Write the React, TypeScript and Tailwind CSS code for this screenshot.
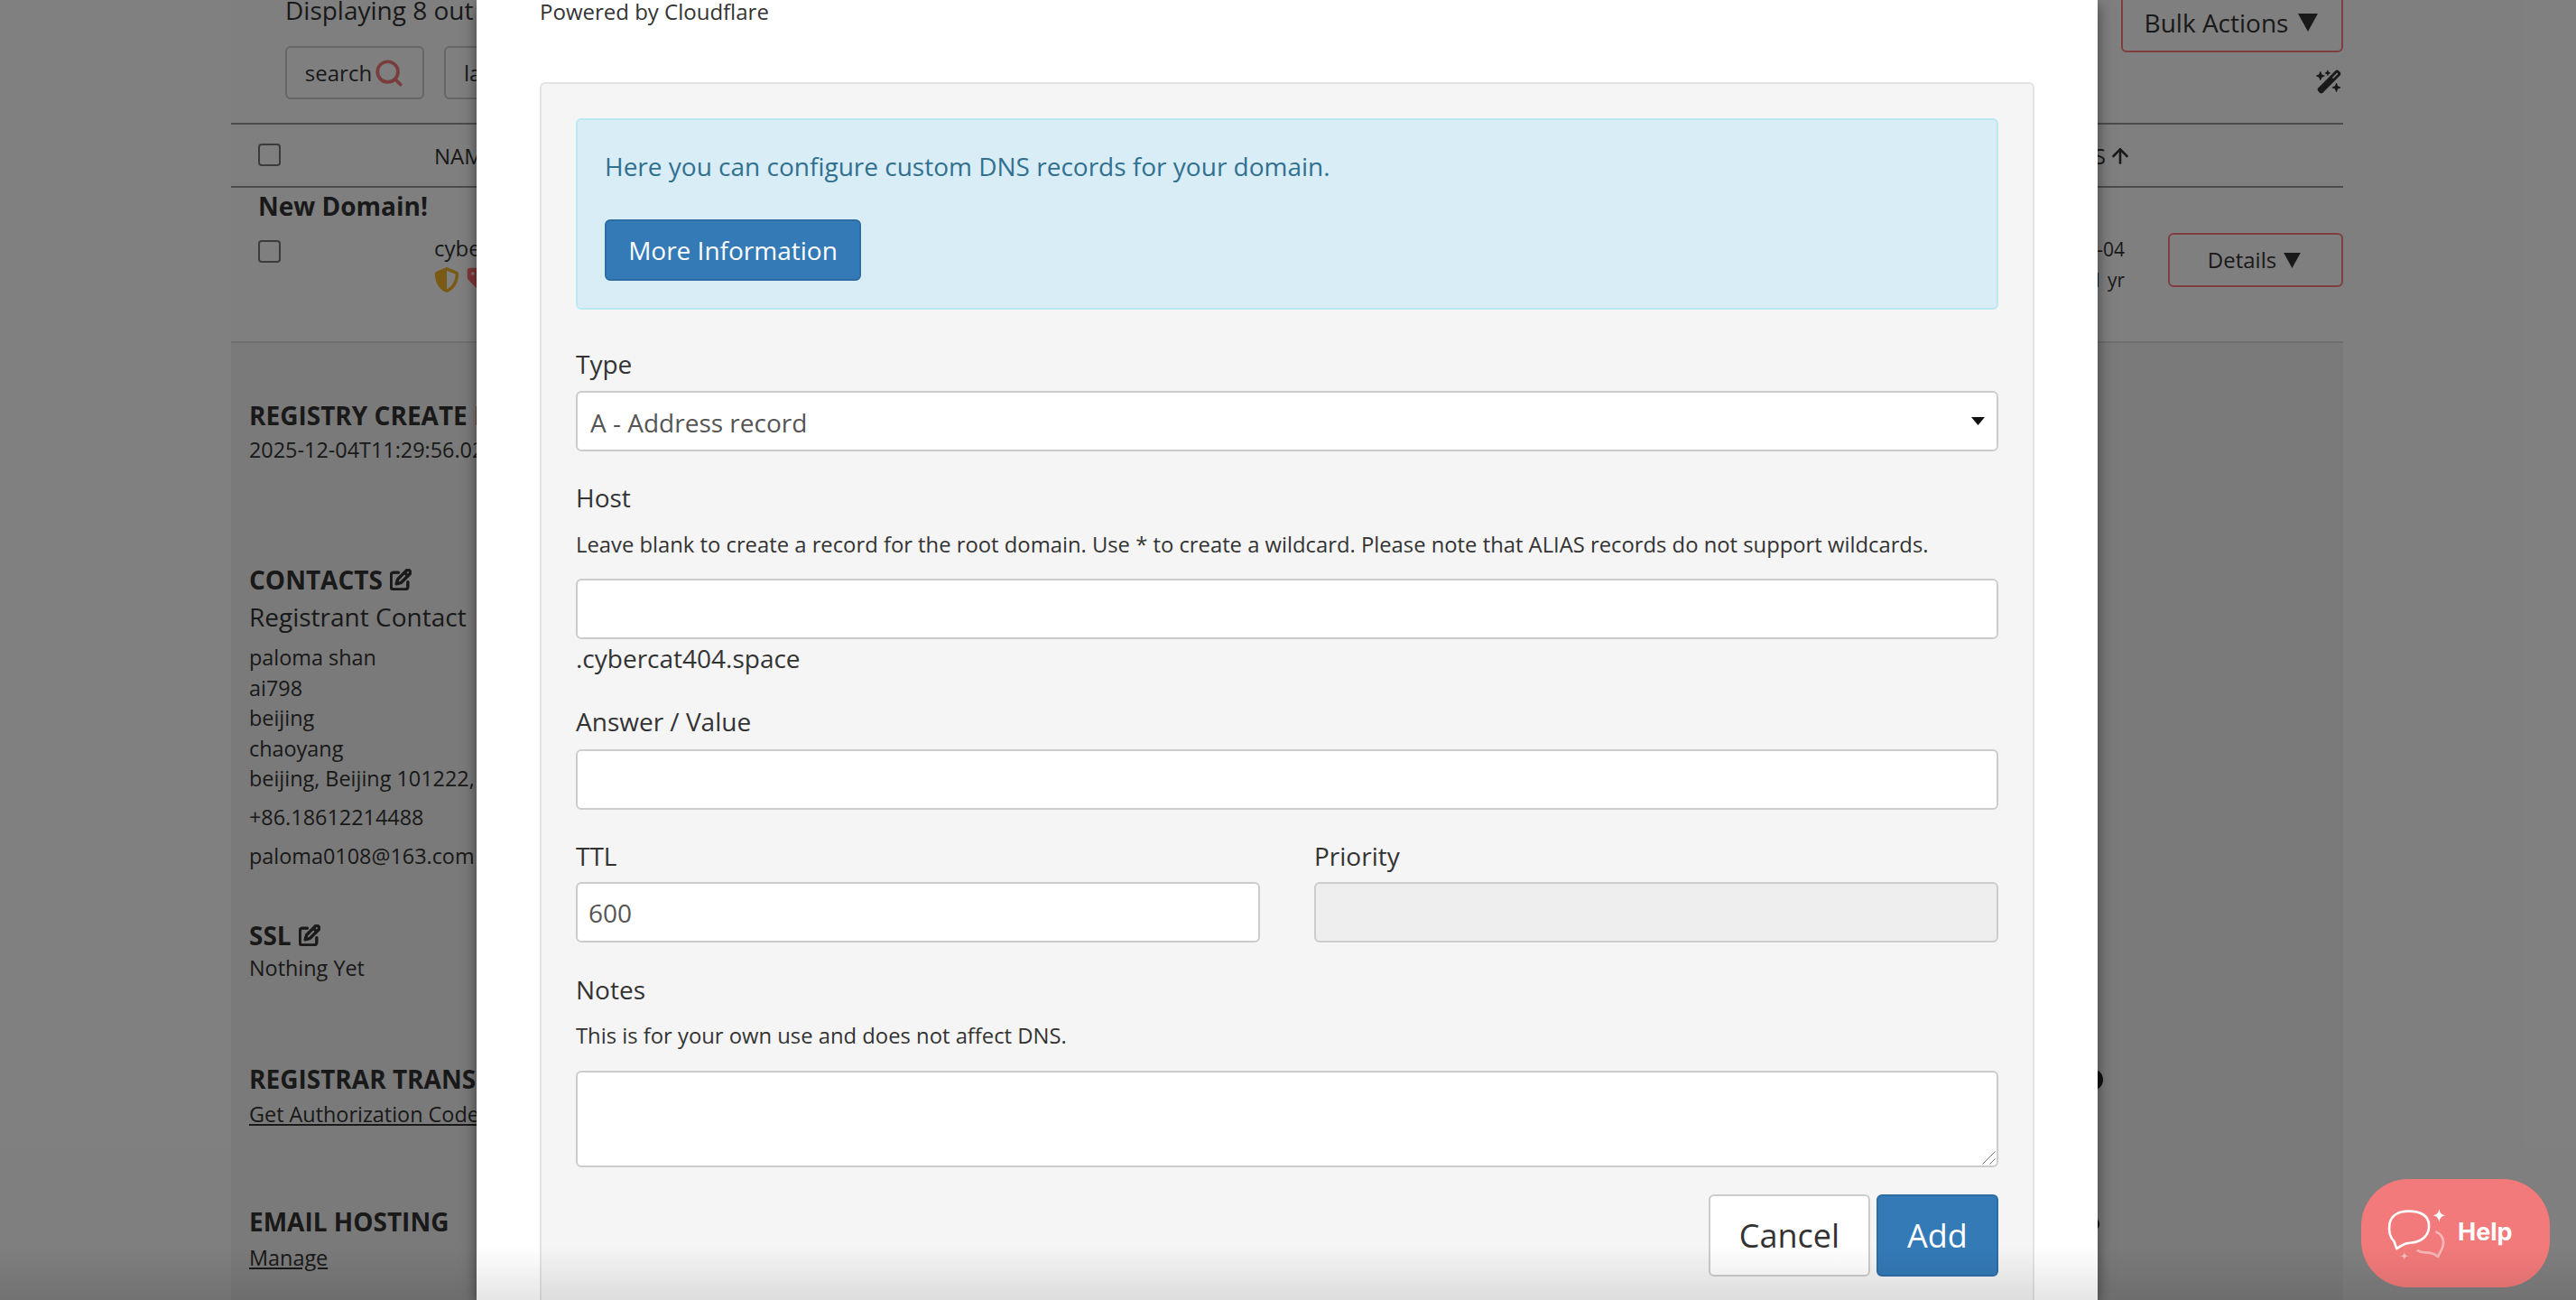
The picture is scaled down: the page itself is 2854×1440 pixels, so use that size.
import { Search, ArrowUp } from "lucide-react";
import { FaRegPenToSquare, FaWandMagicSparkles, FaShieldHalved, FaTag } from "react-icons/fa6";

function Checkbox({ className }: { className: string }) {
  return <div className={"h-[25px] w-[25px] shrink-0 rounded-[4px] border-2 border-[#767676] bg-white " + className} />;
}

function Triangle({ className }: { className: string }) {
  return (
    <svg className={className} viewBox="0 0 22 20">
      <path d="M0 0H22L11 20Z" fill="currentColor" />
    </svg>
  );
}

function EditIcon() {
  return <FaRegPenToSquare className="h-[24px] w-[24px]" stroke="currentColor" strokeWidth={24} />;
}

function Head({ className, children }: { className: string; children: React.ReactNode }) {
  return <div className={"flex items-center gap-[8px] whitespace-nowrap text-[28px] font-bold leading-[36px] " + className}>{children}</div>;
}

function Line({ className, children }: { className: string; children: React.ReactNode }) {
  return <div className={"whitespace-nowrap text-[23.4px] leading-[28px] " + className}>{children}</div>;
}

function Page() {
  return (
    <div className="mx-[256px] w-[2340px] text-[#333]">
      <div className="flex h-[136px] justify-between">
        <div className="pl-[60px]">
          <div className="-mt-[2px] whitespace-nowrap text-[28px] leading-[26px]">Displaying 8 out of 8 domains</div>
          <div className="mt-[27px] flex gap-[22px]">
            <div className="flex h-[59px] w-[154px] items-center justify-center gap-[2px] rounded-[6px] border-2 border-[#ccc] text-[24px]">
              search
              <Search className="h-[34px] w-[34px] text-[#f27a7a]" strokeWidth={2.6} />
            </div>
            <div className="flex h-[59px] w-[200px] items-center rounded-[6px] border-2 border-[#ccc] pl-[20px] text-[24px]">
              language
            </div>
          </div>
        </div>
        <div className="flex flex-col items-end">
          <div className="-mt-[10px] flex h-[68px] w-[246px] items-center justify-center gap-[11px] rounded-[6px] border-2 border-[#ff7a7a] pr-[2px] pt-[2px] text-[28px]">
            Bulk Actions <Triangle className="h-[20px] w-[22px]" />
          </div>
          <FaWandMagicSparkles className="mr-[1px] mt-[18px] h-[29px] w-[29px]" />
        </div>
      </div>
      <div className="flex h-[72px] items-center border-y-2 border-[#999] pl-[30px]">
        <Checkbox className="-mt-[2px]" />
        <span className="ml-[170px] pt-[2px] text-[24px]">NAME</span>
        <span className="ml-auto mr-[234px] flex items-center pt-[1px] text-[24px]">
          STATUS <ArrowUp className="ml-[3px] h-[26px] w-[26px]" strokeWidth={2.4} />
        </span>
      </div>
      <div className="h-[172px] border-b-2 border-[#ddd] pl-[30px]">
        <div className="pt-[2px] text-[28px] font-bold leading-[36px]">New Domain!</div>
        <div className="flex items-start">
          <Checkbox className="mt-[20px]" />
          <div className="ml-[170px] mt-[16px]">
            <div className="text-[24px] leading-[26px]">cybercat404.space</div>
            <div className="mt-[7px] flex gap-[7px]">
              <FaShieldHalved className="h-[30px] w-[28px] text-[#f0b429]" />
              <FaTag className="h-[28px] w-[28px] text-[#ff6f6f]" />
            </div>
          </div>
          <div className="ml-auto mt-[13px] text-right text-[21px] leading-[34px]">
            <div>2026-12-04</div>
            <div>1 yr</div>
          </div>
          <div className="ml-[48px] mt-[12px] flex h-[60px] w-[194px] items-center justify-center gap-[8px] rounded-[6px] border-2 border-[#ff7a7a] pr-[3px] text-[24px]">
            Details <Triangle className="h-[17px] w-[19px]" />
          </div>
        </div>
      </div>
      <div className="relative h-[1100px] bg-[#f5f5f5] pl-[20px]">
        <Head className="pt-[62px]">REGISTRY CREATE DATE</Head>
        <Line className="mt-[6px]">2025-12-04T11:29:56.02Z</Line>
        <Head className="mt-[112px]">
          CONTACTS <EditIcon />
        </Head>
        <div className="mt-[5px] text-[28px] leading-[36px]">Registrant Contact</div>
        <div className="mt-[11px] text-[23.4px] leading-[33.5px]">
          <div>paloma shan</div>
          <div>ai798</div>
          <div>beijing</div>
          <div>chaoyang</div>
          <div>beijing, Beijing 101222, CN</div>
        </div>
        <Line className="mt-[11px]">+86.18612214488</Line>
        <Line className="mt-[15px]">paloma0108@163.com</Line>
        <Head className="mt-[56px]">
          SSL <EditIcon />
        </Head>
        <Line className="mt-[4px]">Nothing Yet</Line>
        <Head className="mt-[91px]">REGISTRAR TRANSFER</Head>
        <Line className="mt-[7px] underline">Get Authorization Code</Line>
        <Head className="mt-[87px]">EMAIL HOSTING</Head>
        <Line className="mt-[8px] underline">Manage</Line>
        <div className="absolute left-[2050px] top-[804px] h-[24px] w-[24px] rounded-full bg-[#222]" />
        <div className="absolute left-[2054px] top-[968px] h-[16px] w-[16px] rounded-full bg-[#222]" />
      </div>
    </div>
  );
}

const control = "block w-full rounded-[6px] border-2 border-[#ccc] bg-white text-[28px] text-[#555] outline-none";
const label = "text-[28px] leading-[36px] text-[#333]";
const hint = "whitespace-nowrap text-[23.8px] leading-[30px] text-[#333]";

function Modal() {
  return (
    <div className="absolute left-[528px] top-0 h-[1440px] w-[1796px] overflow-hidden bg-white px-[70px] shadow-[0_5px_15px_rgba(0,0,0,0.5)]">
      <div className="-mt-[1px] whitespace-nowrap text-[24px] leading-[28px] text-[#333]">Powered by Cloudflare</div>
      <div className="mt-[64px] h-[1400px] rounded-[6px] border-2 border-[#e3e3e3] bg-[#f5f5f5] px-[38px] pt-[38px]">
        <div className="h-[212px] rounded-[6px] border-2 border-[#bce8f1] bg-[#d9edf7] px-[30px] pt-[33px]">
          <div className="whitespace-nowrap text-[28px] leading-[36px] text-[#31708f]">
            Here you can configure custom DNS records for your domain.
          </div>
          <button className="mt-[41px] block h-[68px] w-[284px] rounded-[6px] border-2 border-[#2e6da4] bg-[#337ab7] text-[28px] text-white">
            More Information
          </button>
        </div>

        <div className={"mt-[42px] " + label}>Type</div>
        <div className="relative mt-[12px]">
          <select className={"h-[67px] appearance-none px-[14px] pt-[2px] " + control} defaultValue="A">
            <option value="A">A - Address record</option>
          </select>
          <svg className="absolute right-[15px] top-[29px] h-[9px] w-[15px]" viewBox="0 0 15 9">
            <path d="M0 0H15L7.5 9Z" fill="#111" />
          </svg>
        </div>

        <div className={"mt-[33px] " + label}>Host</div>
        <div className={"mt-[19px] " + hint}>
          Leave blank to create a record for the root domain. Use * to create a wildcard. Please note that ALIAS records do not support wildcards.
        </div>
        <input className={"mt-[23px] h-[67px] px-[12px] " + control} />
        <div className={"mt-[3px] " + label}>.cybercat404.space</div>

        <div className={"mt-[34px] " + label}>Answer / Value</div>
        <input className={"mt-[13px] h-[67px] px-[12px] " + control} />

        <div className="mt-[33px] grid grid-cols-2 gap-[60px]">
          <div>
            <div className={label}>TTL</div>
            <input className={"mt-[11px] h-[67px] px-[12px] " + control} defaultValue="600" />
          </div>
          <div>
            <div className={label}>Priority</div>
            <input disabled className={"mt-[11px] h-[67px] px-[12px] !bg-[#eee] " + control} />
          </div>
        </div>

        <div className={"mt-[34px] " + label}>Notes</div>
        <div className={"mt-[18px] " + hint}>This is for your own use and does not affect DNS.</div>
        <div className="relative mt-[24px]">
          <textarea className={"h-[107px] resize-none px-[12px] " + control} />
          <svg className="absolute bottom-[3px] right-[3px] h-[15px] w-[15px]" viewBox="0 0 15 15" fill="none" stroke="#777">
            <path d="M0.5 14.5L14.5 0.5M8.5 14.5L14.5 8.5" />
          </svg>
        </div>

        <div className="mt-[30px] flex justify-end gap-[7px]">
          <button className="h-[91px] w-[179px] rounded-[6px] border-2 border-[#ccc] bg-white text-[36px] text-[#333]">Cancel</button>
          <button className="h-[91px] w-[135px] rounded-[6px] border-2 border-[#2e6da4] bg-[#337ab7] text-[36px] text-white">Add</button>
        </div>
      </div>
    </div>
  );
}

function HelpButton() {
  return (
    <div className="absolute bottom-[14px] right-[29px] flex h-[120px] w-[209px] items-center rounded-[52px] bg-[#f27a7a] pl-[26px] font-['Inter',sans-serif]">
      <svg className="h-[63px] w-[73px]" viewBox="300 190 220 190" fill="none">
        <path d="M340 335 L332 312 C316 295 313 275 316 255 C320 225 345 210 380 210 C420 210 445 225 448 255 C450 290 425 312 390 315 C375 316 365 318 340 335Z" stroke="#fff" strokeWidth="8" strokeLinejoin="round" />
        <path d="M470 278 C490 285 500 305 495 325 C492 340 485 345 478 362 C465 350 450 348 435 348 C425 348 415 345 408 340" stroke="#fff" strokeOpacity="0.45" strokeWidth="8" strokeLinejoin="round" />
        <path d="M482 201 C484 216 490 222 504 224 C490 226 484 232 482 247 C480 232 474 226 460 224 C474 222 480 216 482 201Z" fill="#fff" />
        <path d="M366 346 C367 355 371 359 381 360 C371 361 367 365 366 375 C365 365 361 361 351 360 C361 359 365 355 366 346Z" fill="#fff" fillOpacity="0.5" />
      </svg>
      <span className="ml-[8px] -mt-[2px] text-[27px] font-bold text-white">Help</span>
    </div>
  );
}

export default function App() {
  return (
    <div className="relative h-[1440px] w-full overflow-hidden bg-white font-['Open_Sans',sans-serif]">
      <Page />
      <div className="absolute inset-0 bg-black/50" />
      <Modal />
      <HelpButton />
      <div className="pointer-events-none absolute inset-x-0 bottom-0 h-[60px] bg-gradient-to-b from-transparent to-black/10" />
    </div>
  );
}
